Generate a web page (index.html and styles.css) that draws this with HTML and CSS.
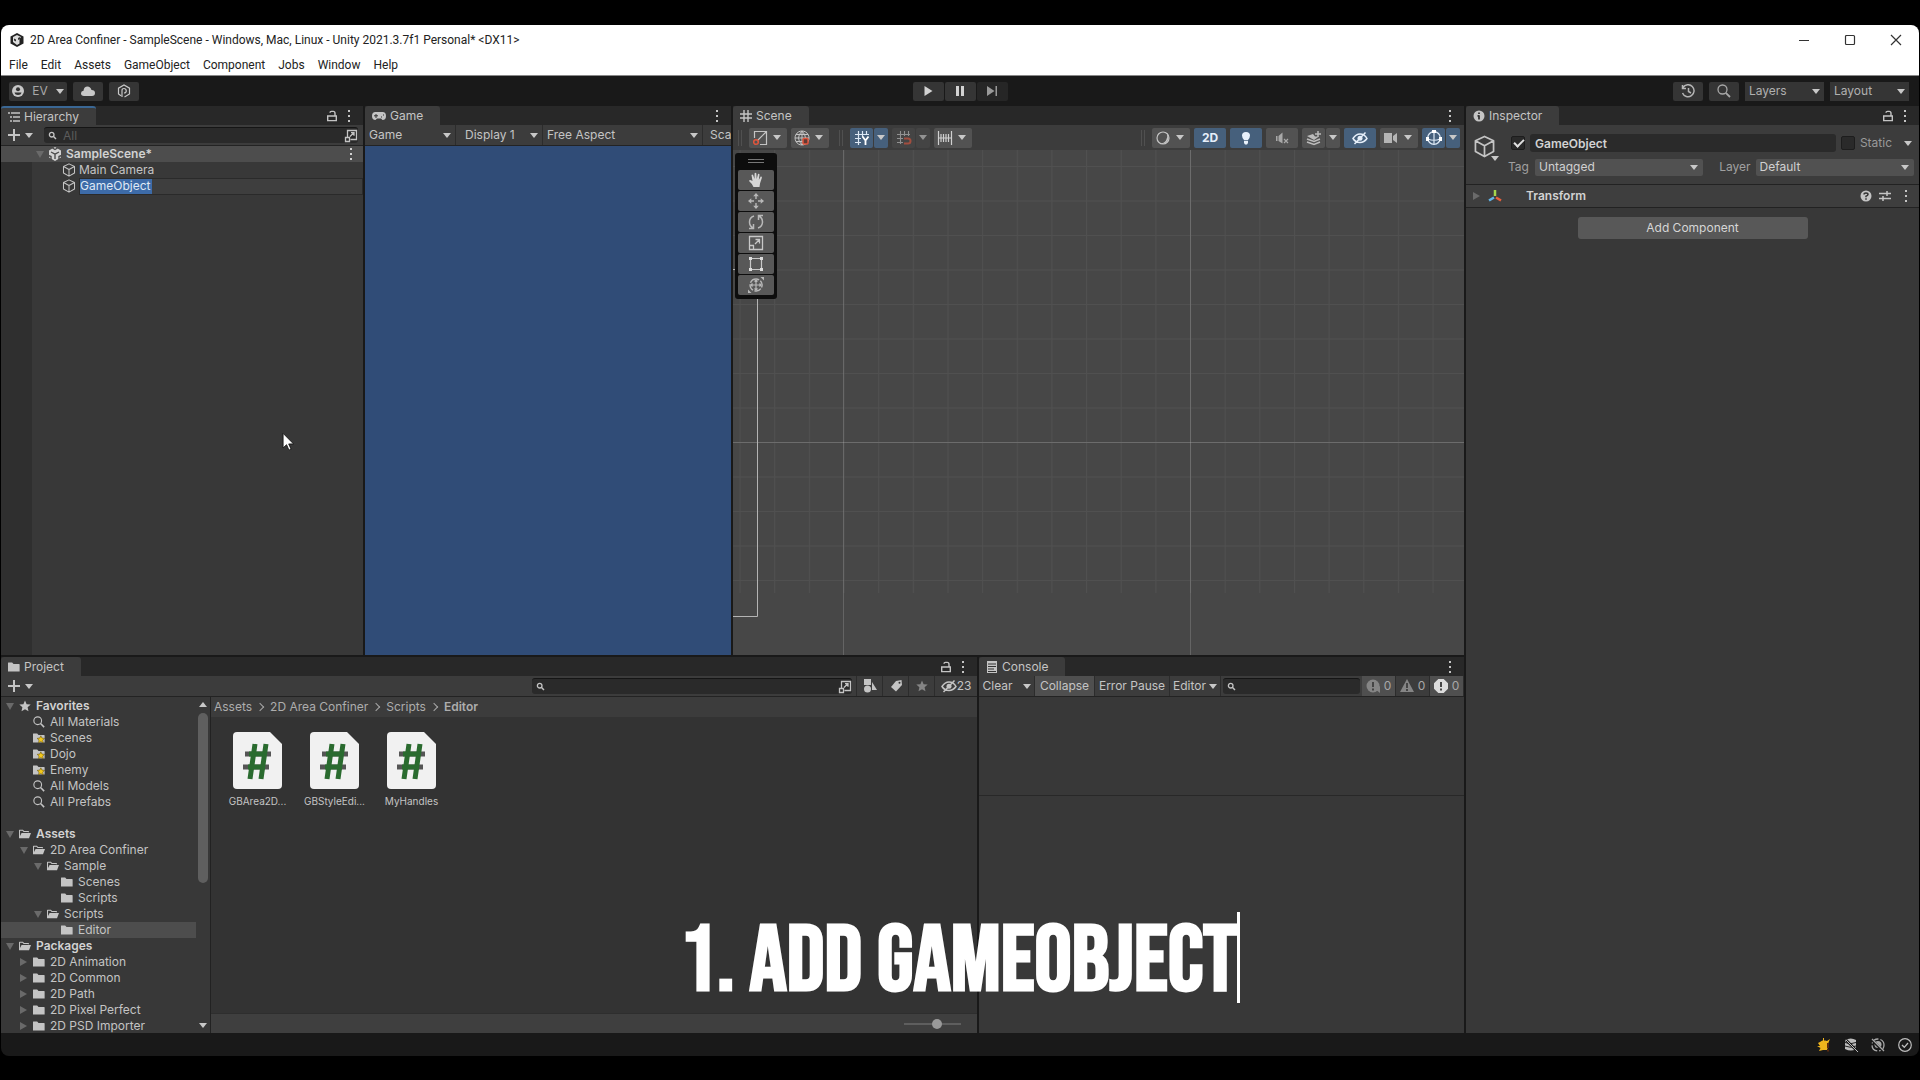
FILE: index.html
```html
<!DOCTYPE html>
<html lang="en">
<head>
<meta charset="utf-8">
<title>2D Area Confiner - SampleScene</title>
<link rel="stylesheet" href="styles.css">
</head>
<body>
<svg class="sprite" aria-hidden="true">
  <symbol id="kebab" viewBox="0 0 4 12"><path fill="currentColor" d="M1 0h2v2H1zM1 5h2v2H1zM1 10h2v2H1z"/></symbol>
  <symbol id="lock" viewBox="0 0 12 12"><path fill="none" stroke="currentColor" stroke-width="1.4" d="M1.7 6h8.6v4.6H1.7zM9 6V3.2Q9 1.4 7.200 1.400H5.500Q4 1.400 4 2.800"/></symbol>
  <symbol id="plus" viewBox="0 0 12 12"><path fill="none" stroke="currentColor" stroke-width="2" d="M6 0v12M0 6h12"/></symbol>
  <symbol id="find" viewBox="0 0 14 14"><circle cx="5.500" cy="5.500" r="4.500" fill="none" stroke="currentColor" stroke-width="1.300"/><path stroke="currentColor" stroke-width="1.800" d="M8.800 8.800L13 13"/></symbol>
  <symbol id="find-s" viewBox="0 0 10 10"><circle cx="3.700" cy="3.700" r="2.300" fill="none" stroke="currentColor" stroke-width="1.300"/><path stroke="currentColor" stroke-width="1.500" d="M5.300 5.300L8 8"/></symbol>
  <symbol id="expand" viewBox="0 0 14 14"><path fill="none" stroke="currentColor" stroke-width="1.300" d="M3.500 8V1.500h9v9H6.500M1.500 8.500h4v4h-4zM6 7.500l4-4M7 3.700h3v3"/></symbol>
  <symbol id="cube" viewBox="0 0 16 16"><path fill="none" stroke="currentColor" stroke-width="1.200" stroke-linejoin="round" d="M8 1l6.300 3v7.500L8 15 1.700 11.500V4zM1.700 4L8 7.500 14.300 4M8 7.500V15"/></symbol>
  <symbol id="folder" viewBox="0 0 13 12"><path fill="currentColor" d="M0 1.500Q0 1 .5 1h4L6 2.700h6q.6 0 .6.6V11H0z"/></symbol>
  <symbol id="folder-open" viewBox="0 0 14 12"><path fill="currentColor" d="M0 11V1.500Q0 1 .5 1h4L6 2.500h5.500V4H10.300V3.700H5.400L4 2.200H1.200v6L3 4.800h11L11.700 11z"/></symbol>
  <symbol id="folder-fav" viewBox="0 0 13 12"><path fill="#c4c4c4" d="M0 1.500Q0 1 .5 1h4L6 2.700h6q.6 0 .6.6V11H0z"/><path fill="#f3c81b" stroke="#5b4a10" stroke-width=".6" d="M8.500 3.600l1.200 2.500 2.800.3-2 2 .6 2.900-2.600-1.400-2.500 1.400.5-2.900-2-2 2.800-.3z"/></symbol>
  <symbol id="star" viewBox="0 0 12 12"><path fill="currentColor" d="M6 .5l1.600 3.700 4.100.4-3.100 2.700.9 4L6 9.200l-3.500 2.100.9-4L.3 4.600l4.100-.4z"/></symbol>
  <symbol id="eye-off" viewBox="0 0 16 14"><path fill="none" stroke="currentColor" stroke-width="1.500" d="M1 7.500Q4 3 8 3q4.500 0 7 4.500Q12 11.500 8 11.500 3.500 11.500 1 7.500zM2.500 13L13.500 1.500"/><circle cx="8" cy="7.200" r="2.500" fill="currentColor"/></symbol>
  <symbol id="unity" viewBox="0 0 14 14"><path fill="currentColor" d="M7 0l6 3.500v7L7 14 1 10.500v-7z"/><path stroke="#4d4d4d" stroke-width="1.400" fill="none" d="M7 7.200V12M7 7.200L3 5M7 7.200L11 5M4.500 1L7 2.500 9.500 1M.5 8.500l2.500 1V13M13.500 8.500l-2.500 1V13"/></symbol>
  <symbol id="script-file" viewBox="0 0 49 57"><path fill="#f1f1f1" d="M4 0h33l12 12v41q0 4-4 4H4q-4 0-4-4V4q0-4 4-4z"/><path fill="none" stroke="#555" stroke-width="5" d="M12 22h26M10 35h26"/><path fill="none" stroke="#2a6b2f" stroke-width="5" d="M22 12l-5 35M33 12l-5 35"/><path fill="none" stroke="#2a6b2f" stroke-width="5" d="M16 22h17M15 35h17"/></symbol>
</svg>

<div class="window">
  <header class="titlebar">
    <svg class="i14" viewBox="0 0 14 14"><path fill="#222" d="M7 0l6.500 3.500v7L7 14 .5 10.500v-7z"/><path fill="#ddd" d="M7 2L3 4v5l4 3 2.500-1.500V6L11 4z"/><path fill="#333" d="M4 5.500l2 1v2L4 7.500zM8 5l2-1v2L8 7z"/></svg>
    <h1>2D Area Confiner - SampleScene - Windows, Mac, Linux - Unity 2021.3.7f1 Personal* &lt;DX11&gt;</h1>
    <div class="winctl">
      <button aria-label="Minimize"><svg viewBox="0 0 12 12"><path d="M1 6.500h10"/></svg></button>
      <button aria-label="Maximize"><svg viewBox="0 0 12 12"><rect x="1.500" y="1.500" width="9" height="9" rx="1"/></svg></button>
      <button aria-label="Close"><svg viewBox="0 0 12 12"><path d="M1 1l10 10M11 1L1 11"/></svg></button>
    </div>
  </header>
  <nav class="menubar">
    <a href="#">File</a><a href="#">Edit</a><a href="#">Assets</a><a href="#">GameObject</a><a href="#">Component</a><a href="#">Jobs</a><a href="#">Window</a><a href="#">Help</a>
  </nav>

  <div class="mainbar">
    <div class="bar-left">
      <button class="tb account"><svg class="i12" viewBox="0 0 12 12"><circle cx="6" cy="6" r="6" fill="#c8c8c8"/><circle cx="6" cy="4.300" r="2" fill="#333"/><path fill="#333" d="M2.500 7.500h7Q9 10 6 10T2.500 7.500z"/></svg>EV<i class="tri"></i></button>
      <button class="tb sq" aria-label="Cloud"><svg class="i14" viewBox="0 0 14 14"><path fill="#c8c8c8" d="M3 12Q0 12 0 9.300 0 7 2.500 6.700 3 2.500 6.500 2.500 9.500 2.500 10.500 6 14 6 14 9q0 3-3 3z"/></svg></button>
      <button class="tb sq" aria-label="Version control"><svg class="i14" viewBox="0 0 14 14"><path fill="none" stroke="#c8c8c8" stroke-width="1.200" d="M4 11.800L1.500 10V4.200L7 1l5.500 3.200V10L7.500 13M5 13V6.500Q5 4.500 7 4.500t2.300 2.300Q9.300 9 7 9"/></svg></button>
    </div>
    <div class="play">
      <button class="tb" aria-label="Play"><svg class="i12" viewBox="0 0 12 12"><path fill="#d2d2d2" d="M2.500 1v10l8-5z"/></svg></button>
      <button class="tb" aria-label="Pause"><svg class="i12" viewBox="0 0 12 12"><path fill="#d2d2d2" d="M2 1h3v10H2zM7 1h3v10H7z"/></svg></button>
      <button class="tb dim" aria-label="Step"><svg class="i12" viewBox="0 0 12 12"><path fill="#999" d="M1 1v10l7.500-5zM9.500 1H11v10H9.500z"/></svg></button>
    </div>
    <div class="bar-right">
      <button class="tb sq" aria-label="Undo history"><svg class="i14" viewBox="0 0 14 14"><path fill="none" stroke="#b5b5b5" stroke-width="1.500" d="M2 3.500A6 6 0 1 1 1.500 9M1.500 1v3.500H5M7.500 4v3.500L10 9"/></svg></button>
      <button class="tb sq" aria-label="Search"><svg class="i14"><use href="#find"/></svg></button>
      <label class="drop tb-drop"><select aria-label="Layers"><option>Layers</option></select></label>
      <label class="drop tb-drop"><select aria-label="Layout"><option>Layout</option></select></label>
    </div>
  </div>

  <main class="workspace">
    <div class="stage">
      <div class="upper">
        <section class="panel hierarchy">
          <div class="tabs">
            <button class="tab active"><svg class="i12" viewBox="0 0 12 12"><path stroke="currentColor" stroke-width="1.400" d="M0 2h2M3 2h9M2 6h2M5 6h7M2 10h2M5 10h7"/></svg>Hierarchy</button>
            <span class="tab-tools"><svg class="i12"><use href="#lock"/></svg><svg class="keb"><use href="#kebab"/></svg></span>
          </div>
          <div class="tools">
            <button class="add" aria-label="Create"><svg class="i12"><use href="#plus"/></svg><i class="tri"></i></button>
            <label class="search"><svg class="i10"><use href="#find-s"/></svg><input type="text" placeholder="All" aria-label="Search hierarchy"><svg class="i14"><use href="#expand"/></svg></label>
          </div>
          <div class="hbody">
            <div class="hrow scene"><i class="fold"></i><svg class="i14"><use href="#unity"/></svg><b>SampleScene*</b><svg class="keb"><use href="#kebab"/></svg></div>
            <div class="hrow object"><svg class="i14"><use href="#cube"/></svg><span>Main Camera</span></div>
            <div class="hrow object"><svg class="i14"><use href="#cube"/></svg><label class="rename"><input type="text" value="GameObject" aria-label="Object name"></label></div>
          </div>
        </section>

        <section class="panel game">
          <div class="tabs">
            <button class="tab"><svg class="pad" viewBox="0 0 14 10"><path fill="currentColor" d="M3.500 1h7Q14 1 14 5t-3.500 4L9 7.500H5L3.500 9Q0 9 0 5t3.500-4z"/><path stroke="#333" d="M2 4.800h4M4 3v4M9 6h1M11 4h1"/></svg>Game</button>
            <span class="tab-tools"><svg class="keb"><use href="#kebab"/></svg></span>
          </div>
          <div class="tools game-tools">
            <label class="drop w-view"><select aria-label="View"><option>Game</option></select></label>
            <label class="drop w-display"><select aria-label="Display"><option>Display 1</option></select></label>
            <label class="drop w-aspect"><select aria-label="Aspect"><option>Free Aspect</option></select></label>
            <span class="scale">Scale</span>
          </div>
          <div class="gameview"></div>
        </section>

        <section class="panel sceneview">
          <div class="tabs">
            <button class="tab"><svg class="i12" viewBox="0 0 12 12"><path stroke="currentColor" stroke-width="1.400" d="M0 4h12M0 8h12M4 0v12M8 0v12"/></svg>Scene</button>
            <span class="tab-tools"><svg class="keb"><use href="#kebab"/></svg></span>
          </div>
          <div class="scenebar">
            <div class="group">
              <i class="grip"></i>
              <button class="sb" aria-label="Pivot"><svg class="i16" viewBox="0 0 16 16"><path fill="none" stroke="#c4c4c4" stroke-width="1.200" d="M2.500 8V1.500h12v13H8M5 11l9-9"/><circle cx="4" cy="12" r="2.300" fill="none" stroke="#e0553c" stroke-width="1.500"/></svg><i class="tri"></i></button>
              <button class="sb" aria-label="Orientation"><svg class="i16" viewBox="0 0 16 16"><path fill="none" stroke="#c4c4c4" d="M8 1a7 7 0 1 0 .1 0zM8 1v14M1 8h14M2 4.500h12M2 11.500h12M8 1Q1 8 8 15M8 1q7 7 0 14"/><rect x="9" y="8.500" width="5" height="5.500" rx="1" fill="#613a34" stroke="#e0553c" stroke-width="1.500"/></svg><i class="tri"></i></button>
              <i class="grip"></i>
              <div class="pair"><button class="sb on" aria-label="Grid"><svg class="i16" viewBox="0 0 16 16"><path fill="none" stroke="#dce8f5" stroke-width="1.200" d="M4.500 1v14M8.500 1v6M12.500 1v4M1 4.500h14M1 8.500h6M1 12.500h6"/><path fill="none" stroke="#fff" stroke-width="1.800" d="M8.500 6.500l3 4 3-4M11.500 10.500V15"/></svg></button><button class="sb on thin" aria-label="Grid options"><i class="tri"></i></button></div>
              <div class="pair off"><button class="sb" aria-label="Snap"><svg class="i16" viewBox="0 0 16 16"><path fill="none" stroke="#c4c4c4" stroke-width="1.100" d="M4.500 1v13M8.500 1v5M12.500 1v5M1 4.500h13M1 8.500h6M1 12.500h6"/><path fill="none" stroke="#e0553c" stroke-width="2" d="M8 8.500h4q2.500 0 2.500 2.500T12 13.500H8"/></svg></button><button class="sb thin" aria-label="Snap options"><i class="tri"></i></button></div>
              <button class="sb" aria-label="Increment snap"><svg class="i16" viewBox="0 0 16 16"><path stroke="#d0d0d0" stroke-width="1.200" d="M1.500 1v14M14.500 1v14M4 4v8M6.500 4v8M9 4v8M11.500 4v8M1 8h14"/></svg><i class="tri"></i></button>
            </div>
            <div class="group">
              <i class="grip"></i>
              <button class="sb" aria-label="Draw mode"><svg class="i16" viewBox="0 0 16 16"><circle cx="8" cy="8" r="6" fill="none" stroke="#c4c4c4" stroke-width="1.200"/><path fill="#c4c4c4" d="M12 3.500q3 3.500.5 7.500T5 13.500q4 0 6-3t1-7z"/></svg><i class="tri"></i></button>
              <button class="sb on mode">2D</button>
              <button class="sb on mode" aria-label="Lighting"><svg class="i14" viewBox="0 0 14 14"><path fill="#e9f1fb" d="M7 1q4 0 4 3.600Q11 7 9 9H5Q3 7 3 4.600 3 1 7 1zM5 9.800h4V12l-1 1.500H6L5 12z"/></svg></button>
              <button class="sb mode" aria-label="Audio"><svg class="i14" viewBox="0 0 14 14"><path fill="#a8a8a8" d="M1 5h1.500v5H1zM3.500 5L7.500 1.500v11L3.500 10z"/><path stroke="#a8a8a8" stroke-width="1.200" d="M9 8l4 4M13 8l-4 4"/></svg></button>
              <div class="pair"><button class="sb" aria-label="Effects"><svg class="i16" viewBox="0 0 16 16"><path fill="#bbb" d="M1 6l6-2 2 2.500h4L8 10z"/><path fill="none" stroke="#bbb" stroke-width="1.500" d="M1 9l7 2.500L14 9M1 12l7 2.500 6-2.500M12 1v6M9 4h6"/></svg></button><button class="sb thin" aria-label="Effect options"><i class="tri"></i></button></div>
              <button class="sb on mode" aria-label="Visibility"><svg class="i16"><use href="#eye-off"/></svg></button>
              <button class="sb" aria-label="Camera"><svg class="i16" viewBox="0 0 16 14"><path fill="#b5b5b5" d="M1 2h8v10H1zM10 5l4-3v10l-4-3z"/></svg><i class="tri"></i></button>
              <div class="pair"><button class="sb on" aria-label="Gizmos"><svg class="i16" viewBox="0 0 16 16"><circle cx="8" cy="8" r="6.300" fill="none" stroke="#dce8f5" stroke-width="1.300"/><path fill="none" stroke="#dce8f5" stroke-width="1.200" d="M8 1.500v13M2 9q6 2.500 12 0"/><path fill="#fff" d="M6 0h4v3H6zM0 7h3v4H0zM13 7h3v4h-3z"/></svg></button><button class="sb on thin" aria-label="Gizmo options"><i class="tri"></i></button></div>
            </div>
          </div>
          <div class="canvas">
            <svg class="grid" aria-hidden="true">
              <defs><pattern id="cells" x="110.500" y="292" width="34.650" height="34.500" patternUnits="userSpaceOnUse"><path d="M.5 0V35M0 .5H35" stroke="#fff" stroke-opacity=".05" fill="none"/></pattern></defs>
              <rect width="100%" height="443" fill="url(#cells)"/>
              <path stroke="#fff" stroke-opacity=".16" fill="none" d="M110.500 0V1000M457.500 0V1000M0 292.500H3000"/>
              <path stroke="#b4b4b4" fill="none" d="M0 119.500H24.500V466.500H0"/>
            </svg>
            <div class="palette">
              <i class="handle"></i>
              <button aria-label="Hand"><svg class="i16" viewBox="0 0 16 16"><path fill="#d6d6d6" d="M5.500 15Q4 11.500 1 9q.5-1.500 2-.7L4.500 9 3.500 3q1-1 1.700.3L6.500 7 6.600 1.200q.9-1 1.700 0L8.700 7l1.300-5q1.200-.6 1.500.6L10.800 8l1.900-3.500q1.300-.2 1.200 1.200L12 11.500 11.500 15z"/></svg></button>
              <button aria-label="Move"><svg class="i16" viewBox="0 0 16 16"><path fill="#b8b8b8" d="M8 0l2.800 3.300H8.700V6H7.300V3.300H5.200zM8 16l2.800-3.300H8.700V10H7.300v2.700H5.200zM0 8l3.300-2.800v2.100H6v1.400H3.300v2.100zM16 8l-3.300-2.800v2.100H10v1.400h2.700v2.100z"/></svg></button>
              <button aria-label="Rotate"><svg class="i16" viewBox="0 0 16 16"><path fill="none" stroke="#b8b8b8" stroke-width="1.500" d="M6 2Q1.500 3.500 1.500 8q0 4 3.500 6M1 14.500h4.500V10M10 14q4.500-1.500 4.500-6 0-4-3.500-6M15 1.500h-4.500V6"/></svg></button>
              <button aria-label="Scale"><svg class="i16" viewBox="0 0 16 16"><path fill="none" stroke="#c8c8c8" stroke-width="1.300" d="M1.500 1.500h13v13h-13zM1.500 10.500h4v4M7 9l4.500-4.500M7.500 4.500h4v4"/></svg></button>
              <button aria-label="Rect"><svg class="i16" viewBox="0 0 16 16"><path fill="none" stroke="#c8c8c8" stroke-width="1.200" d="M2.500 2.500h11v11h-11z"/><path fill="#ddd" d="M1 1h3v3H1zM12 1h3v3h-3zM1 12h3v3H1zM12 12h3v3h-3z"/></svg></button>
              <button aria-label="Transform"><svg class="i16" viewBox="0 0 16 16"><path fill="none" stroke="#b8b8b8" stroke-width="1.400" stroke-dasharray="7 1.500" d="M8 2a6 6 0 1 0 .1 0z"/><path fill="none" stroke="#b8b8b8" stroke-width="1.200" d="M8 3v10M3 8h10M6.500 4.500L8 3l1.500 1.500M6.500 11.500L8 13l1.500-1.500M4.500 6.500L3 8l1.500 1.500M11.500 6.500L13 8l-1.500 1.500"/><path fill="#b8b8b8" d="M12.500 0H16v3.500zM0 12.500V16h3.500z"/></svg></button>
            </div>
          </div>
        </section>
      </div>

      <div class="lower">
        <section class="panel project">
          <div class="tabs">
            <button class="tab"><svg class="i12"><use href="#folder"/></svg>Project</button>
            <span class="tab-tools"><svg class="i12"><use href="#lock"/></svg><svg class="keb"><use href="#kebab"/></svg></span>
          </div>
          <div class="tools project-tools">
            <button class="add" aria-label="Create asset"><svg class="i12"><use href="#plus"/></svg><i class="tri"></i></button>
            <label class="search"><svg class="i10"><use href="#find-s"/></svg><input type="text" aria-label="Search project"><svg class="i14"><use href="#expand"/></svg></label>
            <div class="filters">
              <button aria-label="By type"><svg class="i14" viewBox="0 0 14 14"><path fill="currentColor" d="M1 0h7v6H1zM9 3l5 8H9z"/><circle cx="4.500" cy="10" r="3.500" fill="currentColor"/></svg></button>
              <button aria-label="By label"><svg class="i12" viewBox="0 0 12 12"><path fill="currentColor" d="M6 1l5.500-1L12 5l-6 6.500L1 7z"/><circle cx="9.500" cy="2.700" r="1" fill="#333"/></svg></button>
              <button class="faded" aria-label="Favorite"><svg class="i12"><use href="#star"/></svg></button>
              <button class="hidden-count"><svg class="i16"><use href="#eye-off"/></svg>23</button>
            </div>
          </div>
          <div class="pbody">
            <ul class="tree">
              <li class="l0"><i class="fold"></i><svg class="i12"><use href="#star"/></svg><b>Favorites</b></li>
              <li class="l1"><i class="nofold"></i><svg class="i12"><use href="#find"/></svg>All Materials</li>
              <li class="l1"><i class="nofold"></i><svg class="i12"><use href="#folder-fav"/></svg>Scenes</li>
              <li class="l1"><i class="nofold"></i><svg class="i12"><use href="#folder-fav"/></svg>Dojo</li>
              <li class="l1"><i class="nofold"></i><svg class="i12"><use href="#folder-fav"/></svg>Enemy</li>
              <li class="l1"><i class="nofold"></i><svg class="i12"><use href="#find"/></svg>All Models</li>
              <li class="l1"><i class="nofold"></i><svg class="i12"><use href="#find"/></svg>All Prefabs</li>
              <li class="l0 root"><i class="fold"></i><svg class="i12"><use href="#folder-open"/></svg><b>Assets</b></li>
              <li class="l1"><i class="fold"></i><svg class="i12"><use href="#folder-open"/></svg>2D Area Confiner</li>
              <li class="l2"><i class="fold"></i><svg class="i12"><use href="#folder-open"/></svg>Sample</li>
              <li class="l3"><i class="nofold"></i><svg class="i12"><use href="#folder"/></svg>Scenes</li>
              <li class="l3"><i class="nofold"></i><svg class="i12"><use href="#folder"/></svg>Scripts</li>
              <li class="l2"><i class="fold"></i><svg class="i12"><use href="#folder-open"/></svg>Scripts</li>
              <li class="l3 selected"><i class="nofold"></i><svg class="i12"><use href="#folder"/></svg>Editor</li>
              <li class="l0"><i class="fold"></i><svg class="i12"><use href="#folder-open"/></svg><b>Packages</b></li>
              <li class="l1"><i class="fold shut"></i><svg class="i12"><use href="#folder"/></svg>2D Animation</li>
              <li class="l1"><i class="fold shut"></i><svg class="i12"><use href="#folder"/></svg>2D Common</li>
              <li class="l1"><i class="fold shut"></i><svg class="i12"><use href="#folder"/></svg>2D Path</li>
              <li class="l1"><i class="fold shut"></i><svg class="i12"><use href="#folder"/></svg>2D Pixel Perfect</li>
              <li class="l1"><i class="fold shut"></i><svg class="i12"><use href="#folder"/></svg>2D PSD Importer</li>
            </ul>
            <div class="scrollbar"><i class="tri up"></i><div class="track"><div class="thumb"></div></div><i class="tri"></i></div>
            <div class="files">
              <nav class="crumbs"><a href="#">Assets</a><i></i><a href="#">2D Area Confiner</a><i></i><a href="#">Scripts</a><i></i><b>Editor</b></nav>
              <div class="icons">
                <figure><svg><use href="#script-file"/></svg><figcaption>GBArea2D...</figcaption></figure>
                <figure><svg><use href="#script-file"/></svg><figcaption>GBStyleEdi...</figcaption></figure>
                <figure><svg><use href="#script-file"/></svg><figcaption>MyHandles</figcaption></figure>
              </div>
              <div class="zoombar"><input type="range" min="0" max="100" value="60" aria-label="Icon size"></div>
            </div>
          </div>
        </section>

        <section class="panel console">
          <div class="tabs">
            <button class="tab"><svg class="i12" viewBox="0 0 12 12"><path fill="currentColor" d="M1 0h10v12H1z"/><path stroke="#333" d="M2 3h8M2 5.500h8M2 8h6M2 10.500h8"/></svg>Console</button>
            <span class="tab-tools"><svg class="keb"><use href="#kebab"/></svg></span>
          </div>
          <div class="tools console-tools">
            <button class="c-clear">Clear<i class="tri"></i></button>
            <button class="c-collapse c-on">Collapse</button>
            <button class="c-error">Error Pause</button>
            <button class="c-editor">Editor<i class="tri"></i></button>
            <label class="search"><svg class="i10"><use href="#find-s"/></svg><input type="text" aria-label="Search console"></label>
            <button class="c-count c-on faded"><svg class="i14" viewBox="0 0 14 14"><circle cx="7" cy="7" r="6.500" fill="currentColor"/><path fill="currentColor" d="M9 10l5 4V7z"/><path stroke="#444" stroke-width="2" d="M7 3v5M7 9.500v2"/></svg><span>0</span></button>
            <button class="c-count faded"><svg class="i14" viewBox="0 0 14 14"><path fill="currentColor" d="M7 0l7 13H0z"/><path stroke="#444" stroke-width="2" d="M7 4v5M7 10v2"/></svg><span>0</span></button>
            <button class="c-count c-on"><svg class="i14" viewBox="0 0 14 14"><path fill="#dcdcdc" d="M4.300 0h5.400L14 4.300v5.400L9.700 14H4.300L0 9.700V4.300z"/><path stroke="#444" stroke-width="2" d="M7 3v5M7 9.500v2"/></svg><span>0</span></button>
          </div>
          <div class="log"></div>
          <div class="detail"></div>
        </section>
      </div>
    </div>

    <aside class="panel inspector">
      <div class="tabs">
        <button class="tab"><svg class="i12" viewBox="0 0 12 12"><circle cx="6" cy="6" r="5.500" fill="currentColor"/><path stroke="#333" stroke-width="1.800" d="M6 2.500v1.500M6 5.200V9.500M4.500 5.800H6"/></svg>Inspector</button>
        <span class="tab-tools"><svg class="i12"><use href="#lock"/></svg><svg class="keb"><use href="#kebab"/></svg></span>
      </div>
      <div class="ihead">
        <div class="bigcube"><svg><use href="#cube"/></svg><i class="tri"></i></div>
        <div class="irows">
          <div class="irow">
            <input type="checkbox" checked aria-label="Active">
            <input class="name" type="text" value="GameObject" aria-label="Name">
            <label class="static"><input type="checkbox">Static</label><i class="tri"></i>
          </div>
          <div class="irow second">
            <label for="tag">Tag</label><span class="drop field"><select id="tag"><option>Untagged</option></select></span>
            <label class="lay" for="layer">Layer</label><span class="drop field narrow"><select id="layer"><option>Default</option></select></span>
          </div>
        </div>
      </div>
      <div class="component">
        <i class="fold shut"></i>
        <svg class="i14" viewBox="0 0 14 14"><path fill="none" stroke-width="2.500" stroke="#a5d64b" d="M7 1v6"/><path stroke="#62b5e8" stroke-width="2.500" d="M6 8.500L1 11.500"/><path stroke="#e8603c" stroke-width="2.500" d="M8 8.500l5 3"/></svg>
        <h2>Transform</h2>
        <svg class="i12" viewBox="0 0 12 12"><circle cx="6" cy="6" r="5.500" fill="#c4c4c4"/><path fill="none" stroke="#333" stroke-width="1.500" d="M4 4.500Q4 3 6 3t2 1.500Q8 5.500 6 6.200v1M6 8.300v1.400"/></svg>
        <svg class="i12" viewBox="0 0 12 12"><path stroke="#c4c4c4" stroke-width="1.500" d="M0 3.500h12M0 8.500h12M8 1v5M4 6v5"/></svg>
        <svg class="keb"><use href="#kebab"/></svg>
      </div>
      <div class="addrow"><button>Add Component</button></div>
    </aside>
  </main>

  <footer class="status">
    <svg class="i14" viewBox="0 0 14 14"><path fill="#f0b51c" d="M3 4q3-3 7-1l3-2-1.500 3.500Q12 8 10 12H6l-4 1 1.500-3L0 8h3L1 5zM6 0h1v3H6z"/><path stroke="#5a2a10" stroke-width="2" d="M11 5v5M11 11.500v2"/></svg>
    <svg class="i14" viewBox="0 0 14 14"><path fill="#bdbdbd" d="M1 2q6-3 11 0v9q-5 3-11 0z"/><path fill="none" stroke="#222" d="M1 4.500q5 2.500 11 0M1 8q5 2.500 11 0"/><path stroke="#191919" stroke-width="2.500" d="M2 2l12 12"/><path stroke="#bdbdbd" d="M2 2l12 12"/></svg>
    <svg class="i14" viewBox="0 0 14 14"><circle cx="7" cy="7" r="6" fill="none" stroke="#a8a8a8" stroke-width="1.300" stroke-dasharray="8 2"/><circle cx="7" cy="6.500" r="3.500" fill="#a8a8a8"/><path stroke="#191919" stroke-width="2.500" d="M1 2l12 12"/><path stroke="#a8a8a8" stroke-width="1.200" d="M1 1l12 12"/></svg>
    <svg class="i14" viewBox="0 0 14 14"><circle cx="7" cy="7" r="6.300" fill="none" stroke="#bdbdbd" stroke-width="1.200"/><path fill="none" stroke="#bdbdbd" stroke-width="1.300" d="M4 7l2.300 2.300L10 5"/></svg>
  </footer>
</div>
<svg class="pointer" viewBox="0 0 12 18" aria-hidden="true"><path fill="#fff" stroke="#111" stroke-width=".8" d="M1 1v13.500l3.200-3 2.200 5 2-.9-2.200-4.800h4.500z"/></svg>
<p class="caption">1. ADD GAMEOBJECT</p>
</body>
</html>
```
FILE: styles.css
```css
* { box-sizing: border-box; }
body {
  margin: 0;
  height: 100vh;
  padding: 25px 1px 24px;
  display: flex;
  background: #000;
  color: #c4c4c4;
  font: 12px/16px Inter, "Liberation Sans", sans-serif;
  overflow: hidden;
}
button, input, select {
  font: inherit;
  color: inherit;
  border: 0;
  margin: 0;
  padding: 0;
  background: none;
  appearance: none;
  outline: 0;
  min-width: 0;
}
button { display: flex; align-items: center; justify-content: center; white-space: nowrap; }
a { color: inherit; text-decoration: none; }
svg { flex: none; display: block; }
b { font-weight: 600; }
.sprite { position: absolute; width: 0; height: 0; }
.i10 { width: 10px; height: 10px; }
.i12 { width: 12px; height: 12px; }
.i14 { width: 14px; height: 14px; }
.i16 { width: 16px; height: 16px; }
.keb { width: 4px; height: 12px; }
.tri { flex: none; border: 4px solid transparent; border-top: 5px solid #c8c8c8; border-bottom: 0; }
.tri.up { border-top: 0; border-bottom: 5px solid #c8c8c8; }
.fold { flex: none; border: 4px solid transparent; border-top: 7px solid #6a6a6a; border-bottom: 0; }
.fold.shut { border: 4px solid transparent; border-left: 7px solid #6a6a6a; border-right: 0; margin-right: 1px; }
.nofold { flex: none; width: 8px; }

.window { flex: 1; min-width: 0; display: flex; flex-direction: column; background: #191919; border-radius: 8px; overflow: hidden; }
.titlebar { height: 30px; flex: none; display: flex; align-items: center; gap: 6px; padding: 0 0 0 9px; background: #fff; color: #222; }
.titlebar h1 { flex: 1; margin: 0; font: 12px/16px Roboto, sans-serif; }
.winctl { display: flex; }
.winctl button { width: 46px; height: 28px; }
.winctl svg { width: 12px; height: 12px; fill: none; stroke: #333; stroke-width: 1.2; }
.menubar { height: 21px; flex: none; display: flex; gap: 13px; padding: 0 8px; background: #fff; color: #222; border-bottom: 1px solid #888; font: 12px/20px Roboto, sans-serif; }

.mainbar { height: 30px; flex: none; display: grid; grid-template-columns: 1fr auto 1fr; align-items: center; padding: 0 10px 0 8px; }
.bar-left, .bar-right, .play { display: flex; gap: 6px; }
.bar-right { justify-content: flex-end; }
.play { gap: 1px; padding-left: 2px; }
.tb { height: 19px; background: #353535; border-radius: 2px; color: #a8a8a8; }
.tb.dim { background: #262626; }
.account { width: 58px; gap: 8px; }
.sq { width: 30px; }
.play .tb { width: 31px; }
.drop { position: relative; display: flex; align-items: center; }
.drop select { width: 100%; height: 100%; }
.drop::after { content: ""; position: absolute; right: 4px; border: 4px solid transparent; border-top: 5px solid #c8c8c8; border-bottom: 0; pointer-events: none; }
.tb-drop { width: 79px; height: 19px; padding-left: 4px; background: #353535; color: #b0b0b0; }

.workspace { flex: 1; min-height: 0; display: grid; grid-template-columns: 1463fr 453fr; gap: 2px; }
.stage { min-width: 0; min-height: 0; display: grid; grid-template-rows: 549fr 376fr; gap: 2px; }
.upper { min-height: 0; display: grid; grid-template-columns: 362fr 366fr 731fr; gap: 2px; }
.lower { min-height: 0; display: grid; grid-template-columns: 976fr 485fr; gap: 2px; }
.panel { min-width: 0; min-height: 0; overflow: hidden; display: flex; flex-direction: column; background: #383838; }
.tabs { height: 19px; flex: none; display: flex; justify-content: space-between; background: #282828; }
.tab { background: #3c3c3c; gap: 4px; padding: 1px 17px 0 7px; border-radius: 3px 3px 0 0; }
.tab.active { border-top: 2px solid #3a6794; padding-top: 0; }
.pad { width: 14px; height: 10px; }
.tab-tools { display: flex; align-items: center; gap: 9px; padding-right: 12px; }
.tools { height: 21px; flex: none; display: flex; align-items: stretch; background: #3c3c3c; border-bottom: 1px solid #232323; }
.add { gap: 5px; width: 24px; margin: 0 12px 0 7px; }
.search { flex: 1; min-width: 0; display: flex; align-items: center; gap: 5px; margin: 2px 5px 2px 0; padding: 0 0 0 4px; background: #2a2a2a; border-radius: 3px; border-top: 1px solid #151515; }
.search input { flex: 1; }
.search input::placeholder { color: #5c5c5c; opacity: 1; }

.hbody { flex: 1; background: linear-gradient(90deg, #2f2f2f 31px, #383838 31px); }
.hrow { height: 16px; display: flex; align-items: center; }
.scene { background: #4d4d4d; padding: 0 10px 0 35px; gap: 4px; color: #d2d2d2; }
.scene .keb { margin-left: auto; }
.object { padding-left: 61px; gap: 3px; }
.rename { flex: 1; height: 17px; display: flex; background: #3e3e3e; border: 1px solid #2a2a2a; }
.rename input { width: 72px; background: #3d6ba8; color: #dfe8f5; }

.game-tools .drop { flex: none; padding-left: 4px; border-right: 1px solid #2c2c2c; }
.w-view { width: 91px; }
.game-tools .w-display { width: 87px; padding-left: 9px; }
.w-aspect { width: 160px; }
.scale { padding: 2px 0 0 7px; }
.gameview { flex: 1; background: #304c77; }

.scenebar { height: 25px; flex: none; display: flex; justify-content: space-between; padding: 0 4px 0 5px; background: #3c3c3c; }
.group { display: flex; align-items: center; gap: 4px; }
.grip { width: 4px; height: 16px; margin: 0 3px 0 0; border: 1px solid #505050; border-width: 0 1px; }
.sb + .grip { margin-left: 6px; }
.sb { height: 20px; min-width: 23px; padding: 0 3px; gap: 5px; background: #525252; border-radius: 2px; }
.sb:has(.tri):not(.thin) { width: 38px; justify-content: flex-start; }
.sb.thin { min-width: 14px; width: 14px; padding: 0; }
.sb.on { background: #46607c; color: #e6effa; }
.mode { width: 32px; font-weight: 700; }
.pair { display: flex; gap: 1px; }
.off .sb { background: #444; }
.off svg, .off .tri { opacity: .6; }
.canvas { flex: 1; min-height: 0; position: relative; background: #474747; }
.grid { position: absolute; inset: 0; width: 100%; height: 100%; }
.palette { position: absolute; left: 2px; top: 3px; width: 42px; padding: 0 3px 4px; display: flex; flex-direction: column; gap: 1px; background: #0d0d0d; border-radius: 3px; }
.palette button { height: 20px; background: #585858; border-radius: 2px; }
.handle { width: 16px; height: 4px; margin: 6px auto; border: 1px solid #777; border-width: 1px 0; }

.project-tools .add { margin-right: 0; }
.project-tools .search { flex: none; width: 320px; margin: 2px 4px 2px auto; }
.filters { display: flex; }
.filters button { width: 26px; border-left: 1px solid #2c2c2c; }
.filters .hidden-count { width: 43px; }
.faded { color: #858585; }
.pbody { flex: 1; min-height: 0; display: flex; }
.tree { width: 195px; margin: 0; padding: 0; list-style: none; overflow: hidden; }
.tree li { height: 16px; display: flex; align-items: center; gap: 5px; white-space: nowrap; }
.l0 { padding-left: 5px; }
.l1 { padding-left: 19px; }
.l2 { padding-left: 33px; }
.l3 { padding-left: 47px; }
.tree .root { margin-top: 16px; }
.tree { padding-top: 1px; }
.tree b { color: #d2d2d2; }
.selected { background: #4d4d4d; }
.scrollbar { width: 14px; display: flex; flex-direction: column; align-items: center; padding: 5px 0; }
.track { flex: 1; width: 10px; padding: 6px 0; }
.thumb { height: 56%; background: #5f5f5f; border-radius: 5px; }
.files { flex: 1; min-width: 0; display: flex; flex-direction: column; background: #333; border-left: 1px solid #222; }
.crumbs { height: 20px; display: flex; align-items: center; padding-left: 3px; background: #3c3c3c; color: #adadad; }
.crumbs i { width: 6px; height: 6px; margin: 0 7px 0 5px; border: 1px solid #a8a8a8; border-width: 1px 1px 0 0; transform: rotate(45deg); }
.icons { flex: 1; display: flex; padding: 15px 8px; }
.icons figure { width: 77px; margin: 0; display: flex; flex-direction: column; align-items: center; gap: 4px; font-size: 10px; }
.icons svg { width: 49px; height: 57px; }
.zoombar { height: 20px; display: flex; align-items: center; justify-content: flex-end; padding-right: 16px; background: #3f3f3f; border-top: 1px solid #2e2e2e; }
.zoombar input { width: 57px; height: 10px; background: linear-gradient(#5e5e5e, #5e5e5e) center / 100% 2px no-repeat; }
.zoombar input::-webkit-slider-thumb { appearance: none; width: 10px; height: 10px; border-radius: 50%; background: #999; }

.console-tools button { border-right: 1px solid #2c2c2c; }
.c-clear { width: 56px; gap: 10px; }
.c-collapse { width: 60px; }
.c-on { background: #4f4f4f; }
.c-error { width: 75px; }
.c-editor { width: 51px; gap: 3px; }
.console-tools .search { margin: 2px; }
.c-count { width: 34px; gap: 4px; }
.c-count span { color: #a8a8a8; }
.log { flex: 98; border-bottom: 1px solid #282828; }
.detail { flex: 238; }

.ihead { display: flex; padding: 9px 5px 8px 7px; gap: 14px; background: #3c3c3c; border-bottom: 1px solid #222; }
.bigcube { width: 24px; }
.bigcube svg { width: 23px; height: 23px; margin-top: 1px; }
.bigcube .tri { display: block; width: 8px; margin: -2px 0 0 18px; }
.irows { flex: 1; min-width: 0; }
.irow { display: flex; align-items: center; height: 18px; gap: 5px; }
.irow input[type="checkbox"] { width: 14px; height: 14px; background: #2a2a2a; border: 1px solid #1d1d1d; border-radius: 2px; }
.irow input:checked::after { content: ""; display: block; width: 4px; height: 8px; margin: 0 0 0 4px; border: solid #e0e0e0; border-width: 0 2px 2px 0; transform: rotate(45deg); }
.name { flex: 1; height: 18px; padding: 0 5px; background: #2a2a2a; border-radius: 3px; font-weight: 600; color: #d2d2d2; }
.static { display: flex; align-items: center; gap: 5px; color: #9a9a9a; }
.irow > .tri { margin: 0 2px 0 7px; }
.second { margin-top: 6px; color: #a0a0a0; }
.second label { margin-right: 1px; margin-left: -3px; }
.second .lay { margin: 0 0 0 11px; }
.field { flex: 168; height: 17px; padding-left: 4px; background: #515151; border-radius: 2px; color: #d0d0d0; }
.narrow { flex: 158; }
.field::after { right: 5px; }
.component { height: 23px; display: flex; align-items: center; padding: 0 11px 0 7px; background: #3e3e3e; border-bottom: 1px solid #222; gap: 7px; }
.component h2 { flex: 1; margin: 0 0 0 17px; font-size: 12px; font-weight: 600; color: #d2d2d2; }
.component .keb { margin-left: 6px; }
.addrow { display: flex; justify-content: center; padding: 9px; }
.addrow button { width: 230px; height: 22px; background: #585858; border-radius: 3px; color: #d6d6d6; }

.status { height: 23px; flex: none; display: flex; align-items: center; justify-content: flex-end; gap: 13px; padding: 0 7px; }
.pointer { position: absolute; left: 282px; top: 432px; width: 13px; height: 20px; }
.caption { position: absolute; left: 0; right: 0; top: 912px; width: fit-content; height: 91px; margin: 0 auto; border-right: 3px solid #fff; color: #fff; font: 700 93px/101px "Bebas Neue", "Liberation Sans Narrow", Roboto, sans-serif; white-space: nowrap; }
```
